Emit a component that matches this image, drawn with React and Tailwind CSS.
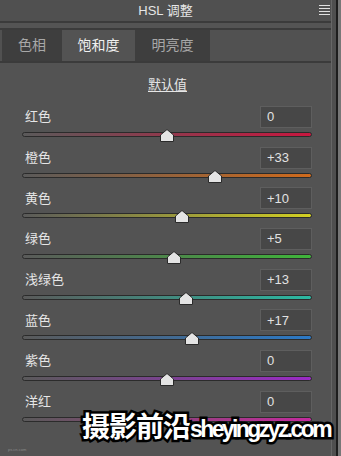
const rows = [
  { label: "红色", value: 0, color: "#c8173f" },
  { label: "橙色", value: 33, color: "#cf6a1c" },
  { label: "黄色", value: 10, color: "#d2cf22" },
  { label: "绿色", value: 5, color: "#3fb43a" },
  { label: "浅绿色", value: 13, color: "#2bb8a2" },
  { label: "蓝色", value: 17, color: "#2b79c6" },
  { label: "紫色", value: 0, color: "#9b2bc6" },
  { label: "洋红", value: 0, color: "#c42a9e" },
];

function Thumb({ value }) {
  const left = 145 + value * 1.45 - 7;
  return (
    <svg
      width="14"
      height="13"
      viewBox="0 0 14 13"
      className="absolute top-[-3px]"
      style={{ left }}
    >
      <path d="M7 0.5 L13.5 6 L13.5 12.5 L0.5 12.5 L0.5 6 Z" fill="#e4e4e4" stroke="#2a2a2a" strokeWidth="1" />
    </svg>
  );
}

function Row({ label, value, color }) {
  const text = value > 0 ? `+${value}` : `${value}`;
  return (
    <div className="h-[40.7px]">
      <div className="flex justify-between items-center h-[22px]">
        <span className="pl-[3px] text-[13px] text-[#e6e6e6]">{label}</span>
        <div className="w-[52px] h-[22px] bg-[#474747] border border-[#5e5e5e] flex items-center pl-[6px] text-[13px] text-[#e2e2e2]">
          {text}
        </div>
      </div>
      <div className="relative mt-[4px] h-[5px]">
        <div
          className="h-[5px] rounded-full border border-[#2b2b2b]"
          style={{ background: `linear-gradient(to right, #5a5a5a, ${color})` }}
        />
        <Thumb value={value} />
      </div>
    </div>
  );
}

export default function App() {
  return (
    <div className="w-[341px] h-[456px] bg-[#535353] relative overflow-hidden flex font-['Liberation_Sans','Noto_Sans_CJK_SC',sans-serif]">
      <div className="w-[331px] h-full flex flex-col">
        {/* title bar */}
        <div className="h-[21px] relative flex items-center justify-center bg-[#505050] text-[13px] text-[#e6e6e6]">
          HSL 调整
          <div className="absolute right-[1px] top-[5px] flex flex-col gap-[2px]">
            <div className="w-[11px] h-[1px] bg-[#e0e0e0]" />
            <div className="w-[11px] h-[1px] bg-[#e0e0e0]" />
            <div className="w-[11px] h-[1px] bg-[#e0e0e0]" />
            <div className="w-[11px] h-[1px] bg-[#e0e0e0]" />
          </div>
        </div>
        <div className="h-[9px] border-t-2 border-b-2 border-[#3b3b3b] bg-[#545454]" />

        {/* tabs */}
        <div className="h-[33px] flex border-b-2 border-[#3b3b3b] pl-[2px] bg-[#515151]">
          <div className="w-[60px] bg-[#3e3e3e] flex items-center justify-center text-[14px] text-[#a8a8a8]">色相</div>
          <div className="w-[73px] bg-[#535353] flex items-center justify-center text-[14px] text-[#f0f0f0]">饱和度</div>
          <div className="w-[75px] bg-[#3e3e3e] flex items-center justify-center text-[14px] text-[#a8a8a8]">明亮度</div>
        </div>

        {/* content */}
        <div className="h-[43px] pt-[14px] flex justify-center">
          <span className="text-[13px] text-[#e6e6e6] underline underline-offset-2 leading-[16px] pl-[4px]">默认值</span>
        </div>
        <div className="ml-[22px] w-[290px]">
          {rows.map((r) => (
            <Row key={r.label} {...r} />
          ))}
        </div>
        <div className="ml-[8px] mt-auto mb-[4px] text-[4px] text-[#8a8a8a] leading-[5px]">ps.cn.com</div>
      </div>
      <div className="w-[1px] h-full bg-[#666666]" />
      <div className="w-[4px] h-full bg-[#4f4f4f]" />
      <div className="w-[2px] h-full bg-[#1e1e1e]" />
      <div className="w-[3px] h-full bg-[#777777]" />

      {/* watermark */}
      <div className="absolute left-[82px] top-[411px] flex items-baseline text-white font-bold [-webkit-text-stroke:5px_#000] [paint-order:stroke_fill] leading-none">
        <span className="text-[28px] font-['Noto_Sans_CJK_SC',sans-serif] tracking-[-1px]">摄影前沿</span>
        <span className="text-[23px] tracking-[-2.6px] font-['Liberation_Sans',sans-serif]">sheyingzyz.com</span>
      </div>
    </div>
  );
}
